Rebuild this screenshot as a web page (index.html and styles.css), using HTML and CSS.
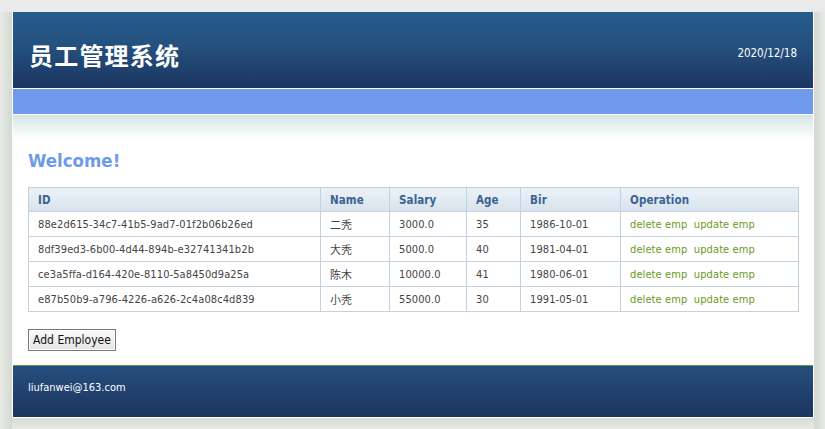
FILE: index.html
```html
<!DOCTYPE html>
<html lang="zh">
<head>
<meta charset="utf-8">
<title>员工管理系统</title>
<link rel="stylesheet" href="styles.css">
</head>
<body>
<div class="page">
  <div class="container">
    <header class="header">
      <h1 class="title">员工管理系统</h1>
      <div class="date">2020/12/18</div>
    </header>
    <div class="menubar"></div>
    <main class="content">
      <h2 class="welcome">Welcome!</h2>
      <table class="grid">
        <colgroup>
          <col class="c-id"><col class="c-name"><col class="c-salary"><col class="c-age"><col class="c-bir"><col class="c-op">
        </colgroup>
        <thead>
          <tr><th>ID</th><th>Name</th><th>Salary</th><th>Age</th><th>Bir</th><th>Operation</th></tr>
        </thead>
        <tbody>
          <tr><td>88e2d615-34c7-41b5-9ad7-01f2b06b26ed</td><td>二秃</td><td>3000.0</td><td>35</td><td>1986-10-01</td><td><a href="#">delete emp</a>&nbsp;&nbsp;<a href="#">update emp</a></td></tr>
          <tr><td>8df39ed3-6b00-4d44-894b-e32741341b2b</td><td>大秃</td><td>5000.0</td><td>40</td><td>1981-04-01</td><td><a href="#">delete emp</a>&nbsp;&nbsp;<a href="#">update emp</a></td></tr>
          <tr><td>ce3a5ffa-d164-420e-8110-5a8450d9a25a</td><td>陈木</td><td>10000.0</td><td>41</td><td>1980-06-01</td><td><a href="#">delete emp</a>&nbsp;&nbsp;<a href="#">update emp</a></td></tr>
          <tr><td>e87b50b9-a796-4226-a626-2c4a08c4d839</td><td>小秃</td><td>55000.0</td><td>30</td><td>1991-05-01</td><td><a href="#">delete emp</a>&nbsp;&nbsp;<a href="#">update emp</a></td></tr>
        </tbody>
      </table>
      <button class="btn" type="button">Add Employee</button>
    </main>
    <footer class="footer">liufanwei@163.com</footer>
  </div>
</div>
</body>
</html>
```
FILE: styles.css
```css
html, body {
  margin: 0;
  padding: 0;
}
body {
  background: #eaeaea;
  font-family: "DejaVu Sans Condensed", "DejaVu Sans", "Noto Sans CJK SC", sans-serif;
  font-size: 11px;
  letter-spacing: 0.1px;
  color: #444;
}
.page {
  margin-top: 12px;
  height: 417px;
  padding: 0 11px 0 12px;
  box-sizing: border-box;
  background:
    linear-gradient(to right, #e8eae6 0, #d3d9d1 12px, transparent 12px, transparent calc(100% - 11px), #d3d9d1 calc(100% - 11px), #e8eae6 100%),
    linear-gradient(to bottom, transparent 0, transparent 405px, #d6dbd4 406px, #e8eae6 100%);
}
.container {
  background: #fff;
  border: 1px solid #fff;
  border-top: 0;
}
.header {
  height: 76px;
  background: linear-gradient(to bottom, #275d8b 0%, #24507f 45%, #1c3560 100%);
  border-bottom: 1px solid #fff;
  display: flex;
  align-items: center;
  justify-content: space-between;
  padding: 0 16px 0 16px;
  color: #fff;
}
.title {
  margin: 0;
  font-family: "Noto Sans CJK SC", sans-serif;
  font-size: 24px;
  font-weight: 700;
  letter-spacing: 1.2px;
  padding-top: 8px;
}
.date {
  font-size: 11.5px;
  letter-spacing: 0;
  padding-top: 6px;
}
.menubar {
  height: 25px;
  background: #7199ee;
  border-bottom: 1px solid #fff;
}
.content {
  padding: 12px 14px 14px 15px;
  background: linear-gradient(to bottom, #d5e6e5 0, #ffffff 24px) no-repeat;
}
.welcome {
  margin: 22px 0 14px 0;
  font-size: 18.5px;
  font-weight: 700;
  letter-spacing: 0;
  color: #6e9be9;
  line-height: 24px;
}
.grid {
  border-collapse: collapse;
  table-layout: fixed;
  width: 771px;
}
.c-id { width: 292px; }
.c-name { width: 69px; }
.c-salary { width: 77px; }
.c-age { width: 54px; }
.c-bir { width: 100px; }
.c-op { width: 178px; }
.grid th, .grid td {
  border: 1px solid #c4d2df;
  text-align: left;
  padding: 0 0 0 9px;
  white-space: nowrap;
}
.grid th {
  height: 23px;
  font-weight: 700;
  color: #3c6294;
  font-size: 11.5px;
  background: linear-gradient(to bottom, #edf2f7 0, #d6e2ed 100%);
}
.grid td {
  height: 24px;
  color: #444;
}
.grid a {
  color: #6b9a22;
  text-decoration: none;
}
.btn {
  margin-top: 17px;
  height: 22px;
  width: 88px;
  padding: 0;
  font-family: "DejaVu Sans Condensed", "DejaVu Sans", sans-serif;
  font-size: 12px;
  color: #111;
  border: 1px solid #777;
  box-shadow: inset 0 0 0 1px #fff;
  background: linear-gradient(to bottom, #fbfbfb 0, #e4e4e4 100%);
  border-radius: 0;
}
.footer {
  height: 52px;
  border-top: 1px solid #5f9a4c;
  background: linear-gradient(to bottom, #264f7e 0, #1c3460 100%);
  color: #fff;
  font-size: 11px;
  letter-spacing: 0;
  display: flex;
  align-items: center;
  padding-left: 15px;
  padding-bottom: 8px;
  box-sizing: border-box;
}
```
